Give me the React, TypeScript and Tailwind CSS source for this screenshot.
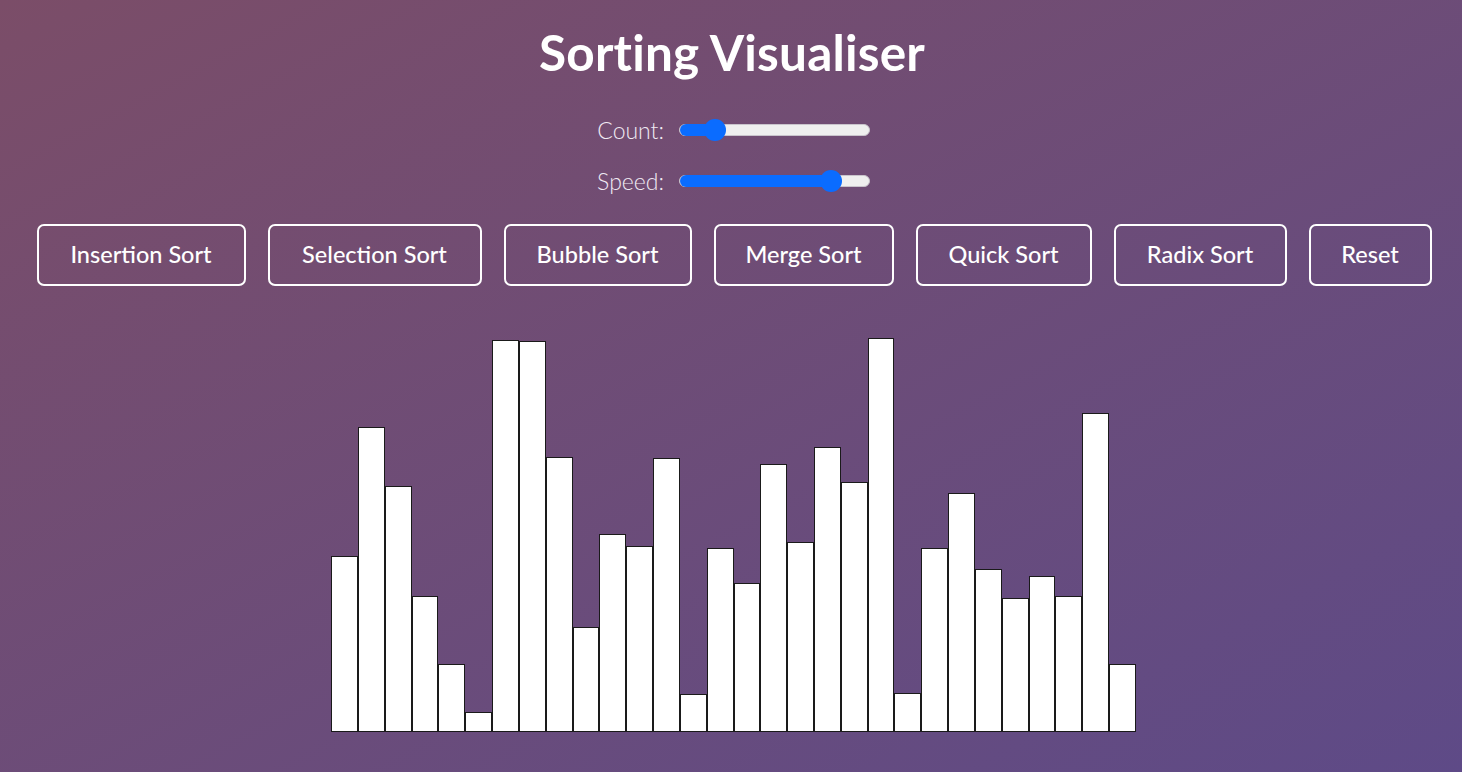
import React from 'react';

const bars = [
  176, 305, 246, 136, 68, 20, 392, 391, 275, 105, 198, 186, 274, 38, 184, 149, 268, 190, 285, 250,
  394, 39, 184, 239, 163, 134, 156, 136, 319, 68,
];

const algorithms = [
  { name: 'Insertion Sort', width: 'w-[209px]' },
  { name: 'Selection Sort', width: 'w-[214px]' },
  { name: 'Bubble Sort', width: 'w-[188px]' },
  { name: 'Merge Sort', width: 'w-[180px]' },
  { name: 'Quick Sort', width: 'w-[176px]' },
  { name: 'Radix Sort', width: 'w-[173px]' },
  { name: 'Reset', width: 'w-[123px]' },
];

interface SliderProps {
  label: string;
  thumb: number;
}

const Slider: React.FC<SliderProps> = ({ label, thumb }) => (
  <div className="flex items-center gap-[15px] h-[30px]">
    <span className="w-[70px] text-right text-[23px] font-light text-[#f0eaf3] whitespace-nowrap">{label}</span>
    <div className="relative w-[191px] h-[12px] rounded-full bg-[#efefef] border border-[#c9c4cc]">
      <div className="absolute left-0 top-[-1px] h-[12px] rounded-full bg-[#0a6cff]" style={{ width: thumb }} />
      <div
        className="absolute top-1/2 w-[22px] h-[22px] -translate-x-1/2 -translate-y-1/2 rounded-full bg-[#0a6cff]"
        style={{ left: thumb }}
      />
    </div>
  </div>
);

export default function App() {
  return (
    <div className="w-full h-[772px] overflow-hidden bg-gradient-to-br from-[#7b4d68] to-[#5e4a87] font-['Lato','Open_Sans',sans-serif] text-white flex flex-col items-center">
      <h1 className="pt-[25px] text-[49.5px] leading-[55px] font-bold tracking-[0.2px] ml-[2px]">Sorting Visualiser</h1>

      <div className="mt-[35px] flex flex-col gap-[21px] ml-[2px]">
        <Slider label="Count:" thumb={35} />
        <Slider label="Speed:" thumb={151} />
      </div>

      <div className="mt-[28px] flex gap-[22px] ml-[6px]">
        {algorithms.map(a => (
          <button
            key={a.name}
            className={`${a.width} h-[62px] rounded-[7px] border-2 border-white text-[23.5px] text-white font-medium`}
          >
            {a.name}
          </button>
        ))}
      </div>

      <div className="mt-[46px] h-[400px] flex items-end ml-[5px]">
        {bars.map((h, i) => (
          <div key={i} className="w-[26.83px] bg-white border border-[#1a1a1a]" style={{ height: h }} />
        ))}
      </div>
    </div>
  );
}
